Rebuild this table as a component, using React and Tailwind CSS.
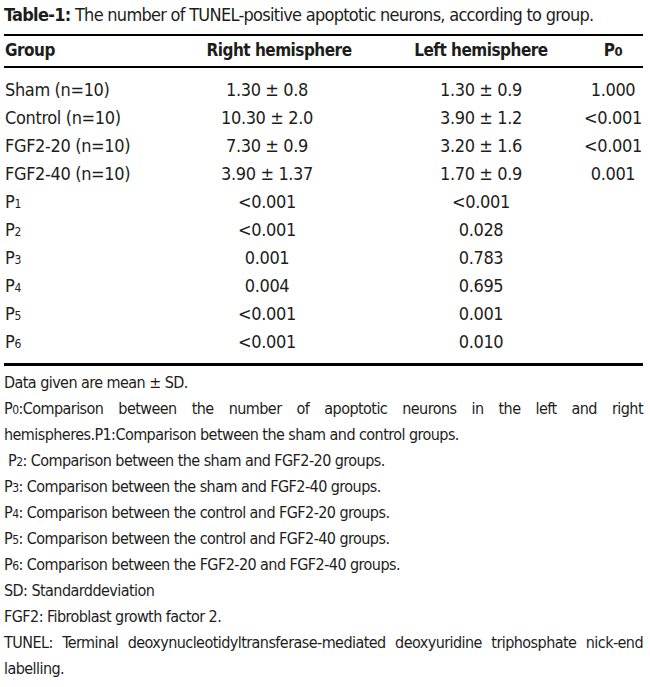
import React from 'react';

const rows = [
  { group: 'Sham (n=10)', right: '1.30 ± 0.8', left: '1.30 ± 0.9', p: '1.000' },
  { group: 'Control (n=10)', right: '10.30 ± 2.0', left: '3.90 ± 1.2', p: '<0.001' },
  { group: 'FGF2-20 (n=10)', right: '7.30 ± 0.9', left: '3.20 ± 1.6', p: '<0.001' },
  { group: 'FGF2-40 (n=10)', right: '3.90 ± 1.37', left: '1.70 ± 0.9', p: '0.001' },
  { sub: '1', right: '<0.001', left: '<0.001', p: '' },
  { sub: '2', right: '<0.001', left: '0.028', p: '' },
  { sub: '3', right: '0.001', left: '0.783', p: '' },
  { sub: '4', right: '0.004', left: '0.695', p: '' },
  { sub: '5', right: '<0.001', left: '0.001', p: '' },
  { sub: '6', right: '<0.001', left: '0.010', p: '' },
];

// small digit after P, sitting on the baseline like in the journal table
const Sub = ({ children }) => <span className="text-[12px] leading-none">{children}</span>;

const App = () => {
  return (
    <div className="w-[650px] h-[687px] bg-white text-[#1d1d1b] pl-[4px] pr-[7px] font-['DejaVu_Sans_Condensed','DejaVu_Sans',sans-serif]">
      <p className="h-[34px] pt-[2px] text-[18px] leading-[26px] tracking-[-0.04em] whitespace-nowrap">
        <b>Table-1:</b> The number of TUNEL-positive apoptotic neurons, according to group.
      </p>

      <div className="border-t-2 border-black grid grid-cols-[151px_224px_204px_60px] h-[32px] items-center text-[17px] tracking-[-0.03em] font-bold">
        <div className="pl-[1px]">Group</div>
        <div className="text-center pl-[24px]">Right hemisphere</div>
        <div className="text-center">Left hemisphere</div>
        <div className="text-center">P<span className="text-[13px] leading-none">0</span></div>
      </div>

      <div className="border-t-2 border-black pt-[7px] pb-[8px] text-[18px] tracking-[-0.02em]">
        {rows.map((r, i) => (
          <div key={i} className="grid grid-cols-[151px_224px_204px_60px] h-[28px] items-center">
            <div className="pl-[1px]">{r.group ? r.group : <>P<Sub>{r.sub}</Sub></>}</div>
            <div className="text-center">{r.right}</div>
            <div className="text-center">{r.left}</div>
            <div className="text-center">{r.p}</div>
          </div>
        ))}
      </div>

      <div className="border-t-[3px] border-black pt-[4px] text-[16px] leading-[26px] tracking-[-0.035em]">
        <p>Data given are mean ± SD.</p>
        <p className="text-justify">
          P<Sub>0</Sub>:Comparison between the number of apoptotic neurons in the left and right hemispheres.P1:Comparison between the sham and control groups.
        </p>
        <p className="pl-[4px]">P<Sub>2</Sub>: Comparison between the sham and FGF2-20 groups.</p>
        <p>P<Sub>3</Sub>: Comparison between the sham and FGF2-40 groups.</p>
        <p>P<Sub>4</Sub>: Comparison between the control and FGF2-20 groups.</p>
        <p>P<Sub>5</Sub>: Comparison between the control and FGF2-40 groups.</p>
        <p>P<Sub>6</Sub>: Comparison between the FGF2-20 and FGF2-40 groups.</p>
        <p>SD: Standarddeviation</p>
        <p>FGF2: Fibroblast growth factor 2.</p>
        <p className="text-justify">
          TUNEL: Terminal deoxynucleotidyltransferase-mediated deoxyuridine triphosphate nick-end labelling.
        </p>
      </div>
    </div>
  );
};

export default App;
